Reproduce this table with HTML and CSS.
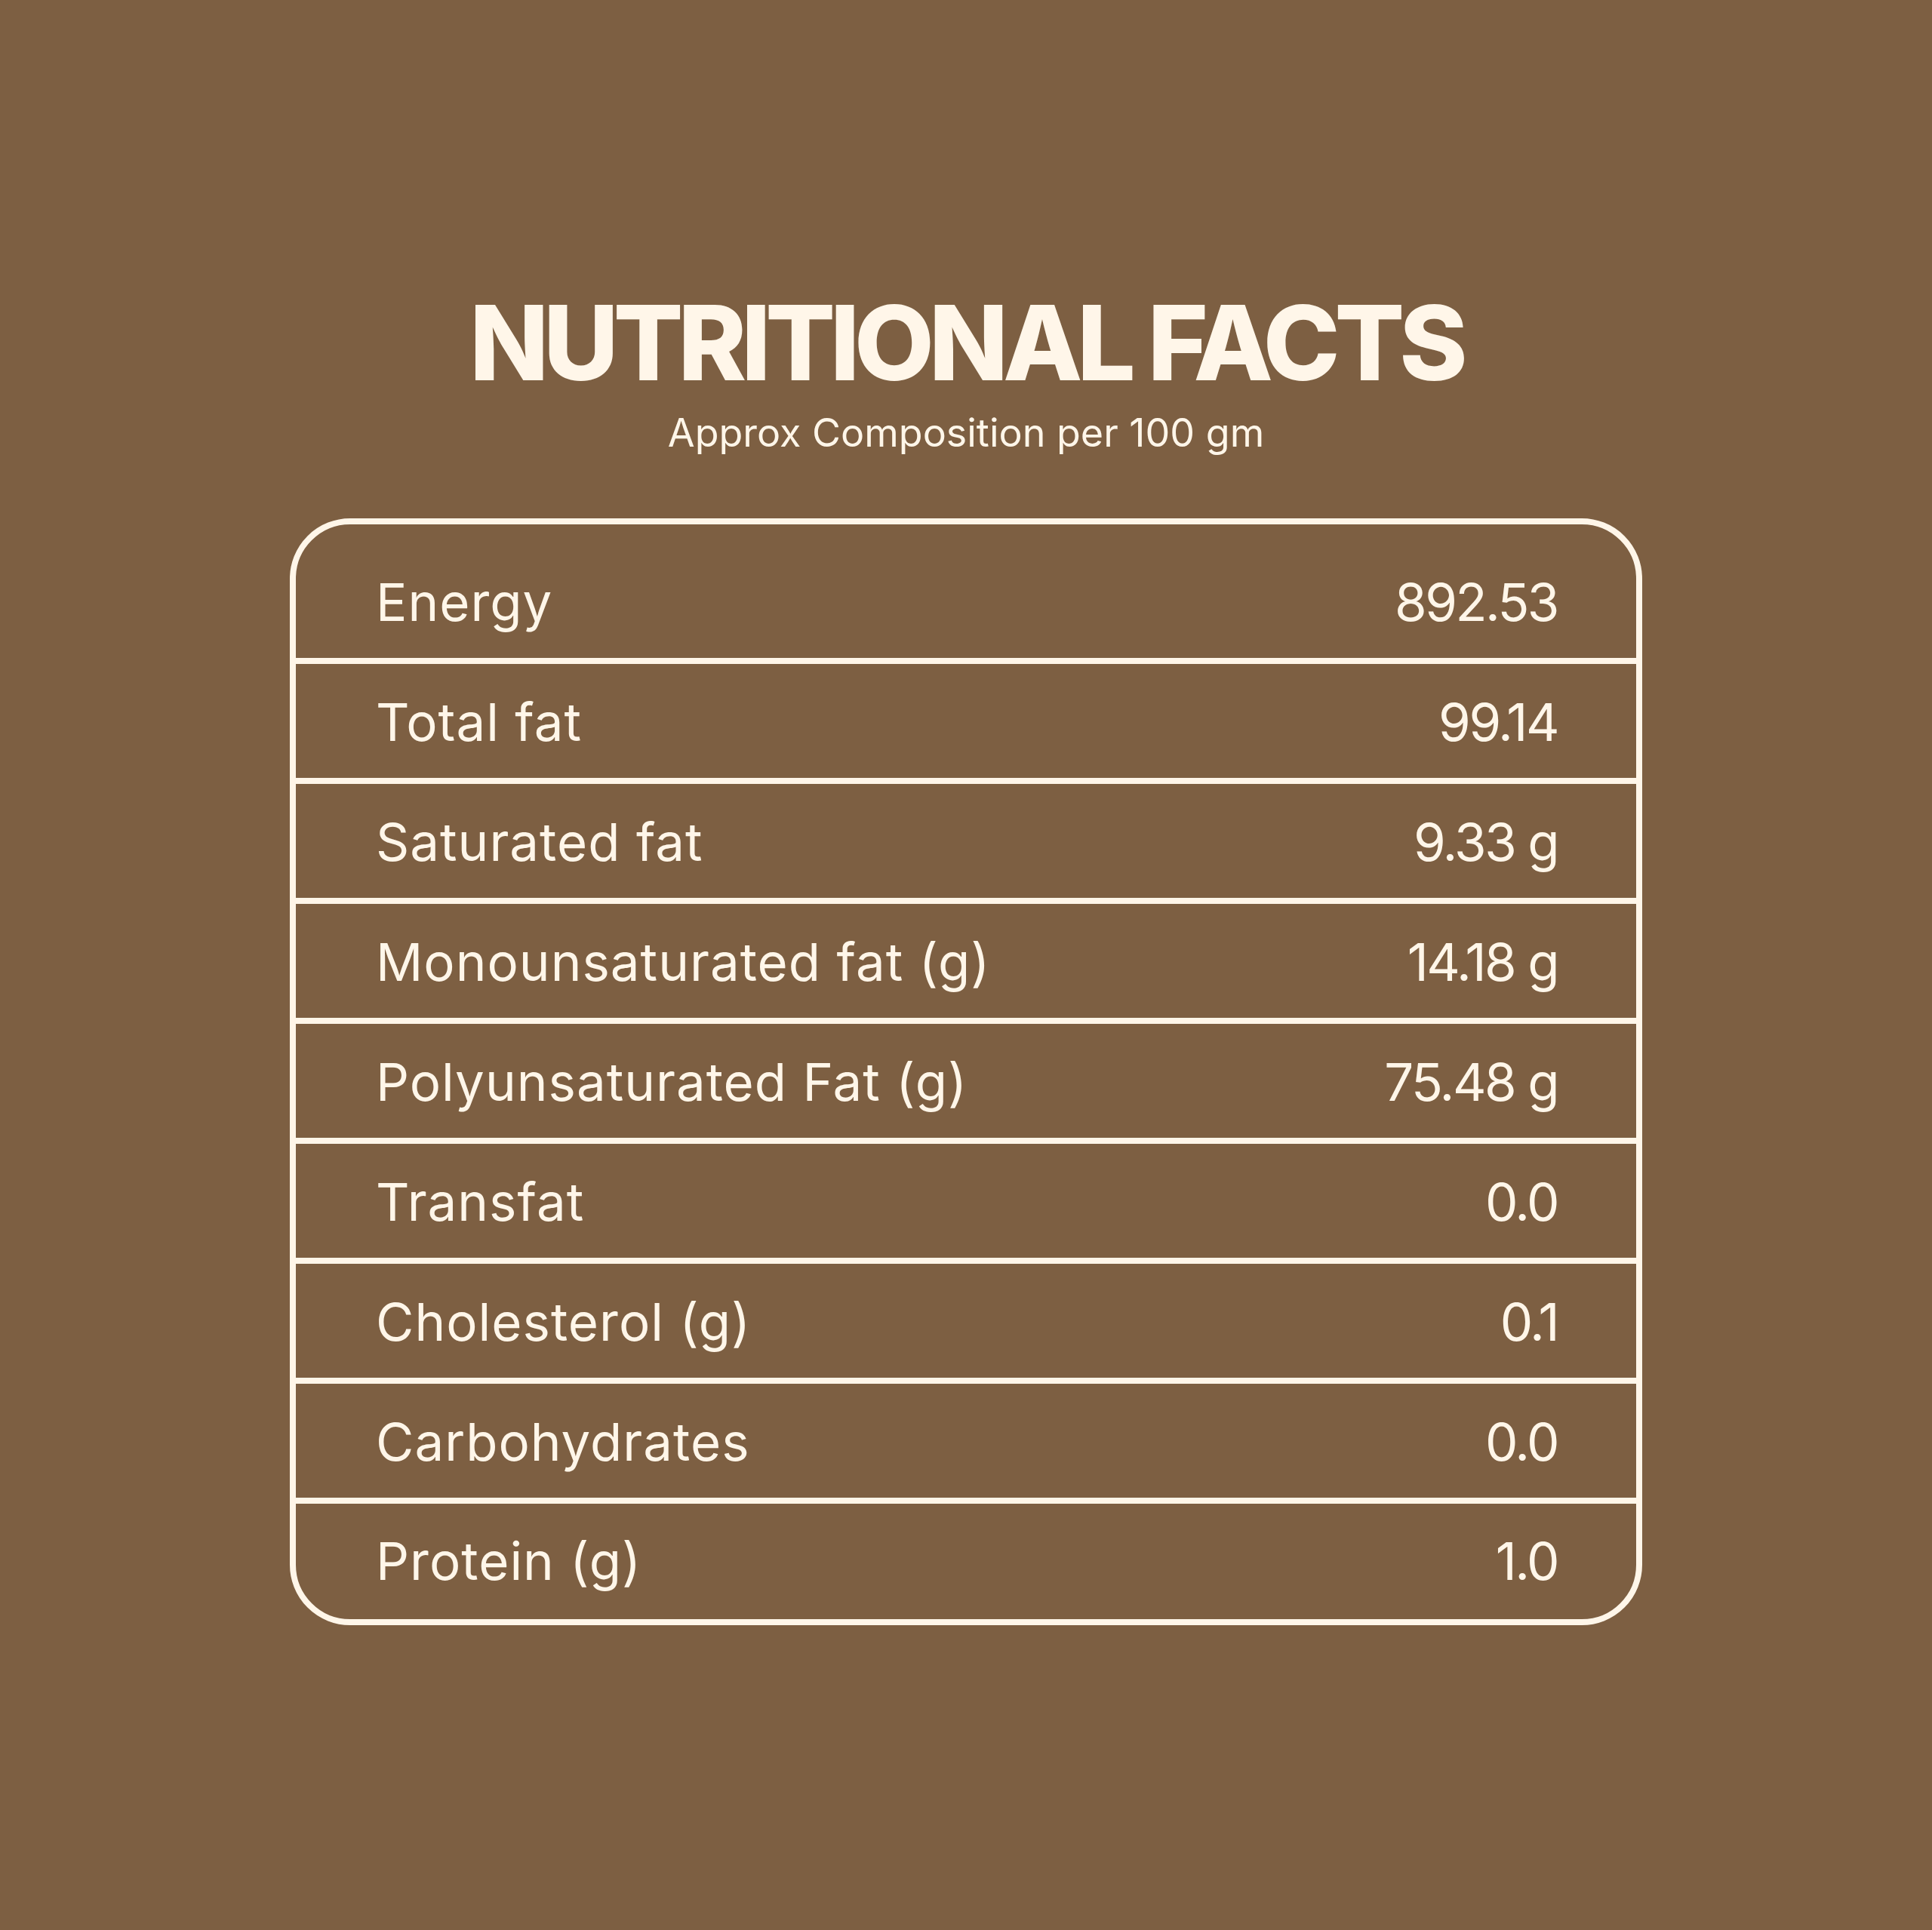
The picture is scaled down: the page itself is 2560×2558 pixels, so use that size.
FILE: index.html
```html
<!DOCTYPE html>
<html lang="en">
<head>
<meta charset="utf-8">
<title>Nutritional Facts</title>
<link rel="stylesheet" href="styles.css">
</head>
<body>
<main class="page">
  <h1 class="title">NUTRITIONAL FACTS</h1>
  <p class="subtitle">Approx Composition per 100 gm</p>
  <section class="card">
    <div class="row row-first"><span class="name">Energy</span><span class="value">892.53</span></div>
    <div class="row"><span class="name">Total fat</span><span class="value">99.14</span></div>
    <div class="row"><span class="name">Saturated fat</span><span class="value">9.33 g</span></div>
    <div class="row"><span class="name">Monounsaturated fat (g)</span><span class="value">14.18 g</span></div>
    <div class="row"><span class="name">Polyunsaturated Fat (g)</span><span class="value">75.48 g</span></div>
    <div class="row"><span class="name">Transfat</span><span class="value">0.0</span></div>
    <div class="row"><span class="name">Cholesterol (g)</span><span class="value">0.1</span></div>
    <div class="row"><span class="name">Carbohydrates</span><span class="value">0.0</span></div>
    <div class="row row-last"><span class="name">Protein (g)</span><span class="value">1.0</span></div>
  </section>
</main>
</body>
</html>
```

FILE: styles.css
```css
html, body {
  margin: 0;
  padding: 0;
  background: #7d5f42;
}
body {
  width: 2560px;
  height: 2558px;
  font-family: "Inter", "Noto Sans", sans-serif;
  color: #fff6e9;
}
.page {
  display: flex;
  flex-direction: column;
  align-items: center;
  padding-top: 386px;
}
.title {
  margin: 0;
  font-size: 137px;
  line-height: 1;
  font-weight: 800;
  letter-spacing: -7px;
}
.subtitle {
  margin: 25px 0 0;
  font-size: 52px;
  line-height: 1;
  font-weight: 400;
}
.card {
  margin-top: 87px;
  width: 1792px;
  box-sizing: border-box;
  border: 8px solid #fff6e9;
  border-radius: 80px;
  display: flex;
  flex-direction: column;
}
.row {
  height: 159px;
  box-sizing: border-box;
  display: flex;
  align-items: center;
  justify-content: space-between;
  padding: 4px 104px 0 106px;
  border-bottom: 8px solid #fff6e9;
  font-size: 69px;
  line-height: 1;
}
.name {
  letter-spacing: 1px;
}
.value {
  letter-spacing: -2.5px;
}
.row-first {
  height: 185px;
  padding-top: 30px;
}
.row-last {
  height: 153px;
  border-bottom: none;
  padding-top: 0;
}
```
